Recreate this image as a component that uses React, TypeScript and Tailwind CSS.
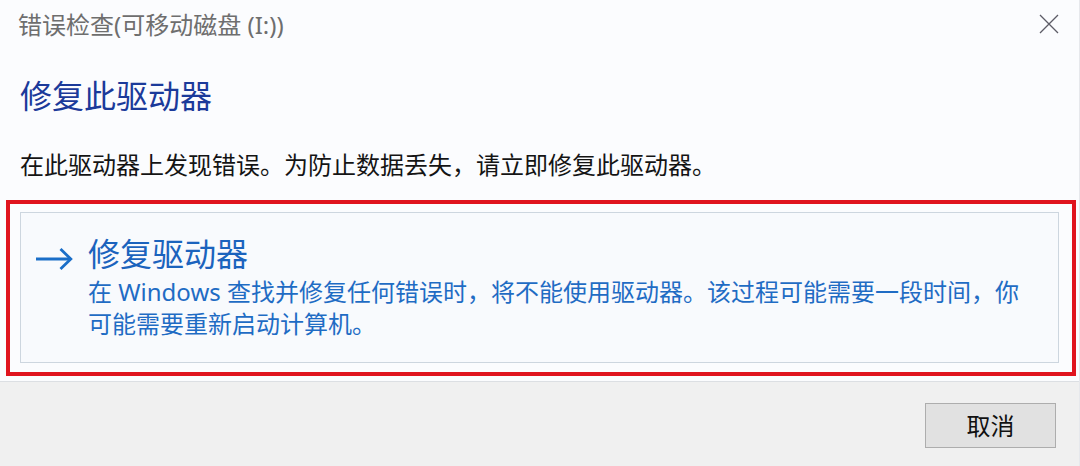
import React from "react";

const FONT = '"Noto Sans", "Noto Sans CJK SC", sans-serif';

function CloseIcon() {
  return (
    <svg width="20" height="20" viewBox="0 0 20 20" fill="none">
      <path d="M1 1 L19 19 M19 1 L1 19" stroke="#5c5c66" strokeWidth="1.3" />
    </svg>
  );
}

function ArrowIcon() {
  return (
    <svg width="38" height="22" viewBox="0 0 38 22" fill="none">
      <path d="M1 11 H35.5" stroke="#1a6ec8" strokeWidth="2.8" />
      <path d="M25.5 1 L35.8 11 L25.5 21" stroke="#1a6ec8" strokeWidth="2.8" strokeLinejoin="miter" />
    </svg>
  );
}

export default function App() {
  return (
    <div
      className="w-[1080px] h-[466px] bg-[#fbfcfe] flex flex-col overflow-hidden border-r border-[#e6e8ec]"
      style={{ fontFamily: FONT }}
    >
      {/* title bar */}
      <div className="h-[50px] flex items-center justify-between pl-[18px] pr-[20px] shrink-0">
        <span className="text-[24px] leading-[30px] text-[#6e6e6e] whitespace-nowrap">
          错误检查(可移动磁盘 (I:))
        </span>
        <div className="-mt-[2px]">
          <CloseIcon />
        </div>
      </div>

      {/* main instruction */}
      <div className="mt-[26px] pl-[20px] text-[32px] leading-[40px] text-[#1b3a9a] whitespace-nowrap">
        修复此驱动器
      </div>

      {/* content text */}
      <div className="mt-[33px] pl-[20px] text-[24px] leading-[32px] text-[#141414] whitespace-nowrap">
        在此驱动器上发现错误。为防止数据丢失，请立即修复此驱动器。
      </div>

      {/* highlighted command link */}
      <div className="mt-[19px] ml-[6px] mr-[3px] border-[4px] border-[#e0141e] pl-[10px] pr-[13px] pt-[8px] pb-[9px]">
        <div className="border border-[#cdd6df] bg-[#f8fafd] flex pl-[14px] pt-[21px] pb-[22px]">
          <div className="mt-[14px] w-[38px] shrink-0">
            <ArrowIcon />
          </div>
          <div className="ml-[15px] flex flex-col">
            <div className="text-[32px] leading-[40px] text-[#1b63bd] whitespace-nowrap">修复驱动器</div>
            <div className="mt-[2px] text-[24px] leading-[32px] text-[#1f6cc4] whitespace-nowrap">
              在 Windows 查找并修复任何错误时，将不能使用驱动器。该过程可能需要一段时间，你
            </div>
            <div className="text-[24px] leading-[32px] text-[#1f6cc4] whitespace-nowrap">
              可能需要重新启动计算机。
            </div>
          </div>
        </div>
      </div>

      {/* footer */}
      <div className="mt-[5px] flex-1 bg-[#f0f0f0] border-t border-[#dcdfe3] flex justify-end items-start pt-[21px] pr-[23px]">
        <button className="w-[131px] h-[45px] bg-[#e1e1e1] border border-[#adadad] text-[24px] leading-[30px] text-[#111111] flex items-center justify-center">
          取消
        </button>
      </div>
    </div>
  );
}
